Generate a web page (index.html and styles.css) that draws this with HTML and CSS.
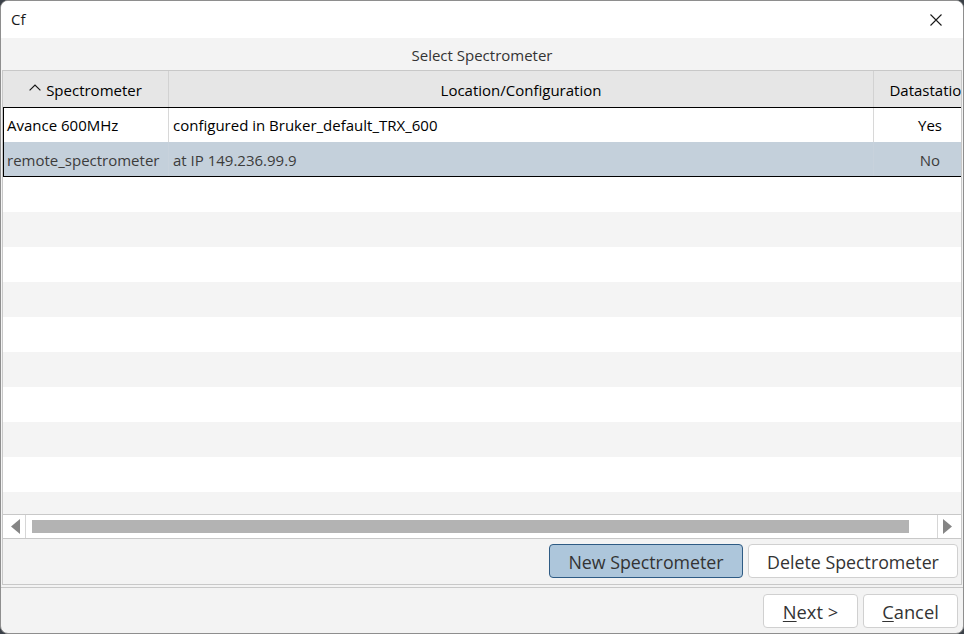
FILE: index.html
```html
<!DOCTYPE html>
<html>
<head>
<meta charset="utf-8">
<link rel="stylesheet" href="styles.css">
</head>
<body>
<div class="window">
  <div class="titlebar">
    <span class="title">Cf</span>
    <svg class="close" width="12" height="12" viewBox="0 0 12 12"><path d="M0.5 0.5 L11.5 11.5 M11.5 0.5 L0.5 11.5" stroke="#1a1a1a" stroke-width="1.1" fill="none"/></svg>
  </div>
  <div class="caption">Select Spectrometer</div>
  <div class="frame">
    <div class="view">
      <div class="table">
        <div class="header">
          <div class="hcell c1"><svg class="chev" width="12" height="7" viewBox="0 0 12 7"><path d="M0.6 6.4 L6 1 L11.4 6.4" stroke="#1a1a1a" stroke-width="1.2" fill="none"/></svg>Spectrometer</div>
          <div class="hcell c2">Location/Configuration</div>
          <div class="hcell c3">Datastation</div>
        </div>
        <div class="focus">
          <div class="row data">
            <div class="cell c1">Avance 600MHz</div>
            <div class="cell c2">configured in Bruker_default_TRX_600</div>
            <div class="cell c3 mid">Yes</div>
          </div>
          <div class="row data sel">
            <div class="cell c1">remote_spectrometer</div>
            <div class="cell c2">at IP 149.236.99.9</div>
            <div class="cell c3 mid">No</div>
          </div>
        </div>
        <div class="row"></div>
        <div class="row alt"></div>
        <div class="row"></div>
        <div class="row alt"></div>
        <div class="row"></div>
        <div class="row alt"></div>
        <div class="row"></div>
        <div class="row alt"></div>
        <div class="row"></div>
        <div class="row alt"></div>
      </div>
    </div>
    <div class="hscroll">
      <div class="sbtn left"><svg width="9" height="15" viewBox="0 0 9 15"><path d="M9 0 L0 7.5 L9 15 Z" fill="#858585"/></svg></div>
      <div class="track"><div class="thumb"></div></div>
      <div class="sbtn right"><svg width="9" height="15" viewBox="0 0 9 15"><path d="M0 0 L9 7.5 L0 15 Z" fill="#858585"/></svg></div>
    </div>
    <div class="actions">
      <button class="btn primary wide1">New Spectrometer</button>
      <button class="btn wide2">Delete Spectrometer</button>
    </div>
  </div>
  <div class="footer">
    <button class="btn small"><u>N</u>ext &gt;</button>
    <button class="btn small"><u>C</u>ancel</button>
  </div>
</div>
</body>
</html>
```
FILE: styles.css
```css
html, body {
  margin: 0;
  padding: 0;
}
body {
  width: 964px;
  height: 634px;
  overflow: hidden;
  background: #3b4148;
  font-family: "Open Sans", "Noto Sans", "DejaVu Sans", sans-serif;
  font-size: 15px;
  color: #000;
}
.window {
  box-sizing: border-box;
  width: 964px;
  height: 634px;
  border: 1px solid #8e8e8e;
  border-radius: 8px;
  background: #f3f3f3;
  overflow: hidden;
  display: flex;
  flex-direction: column;
}
.titlebar {
  height: 37px;
  flex: none;
  background: #ffffff;
  display: flex;
  align-items: center;
  justify-content: space-between;
  padding: 0 21px 0 10px;
}
.title {
  font-size: 15px;
  color: #1a1a1a;
  margin-top: -1px;
}
.close {
  display: block;
}
.caption {
  height: 32px;
  flex: none;
  line-height: 35px;
  text-align: center;
  color: #333;
}
.frame {
  margin: 0 1px;
  height: 515px;
  box-sizing: border-box;
  border: 1px solid #c8c8c8;
  display: flex;
  flex-direction: column;
  flex: none;
}
.view {
  height: 443px;
  overflow: hidden;
  flex: none;
  background: #fff;
}
.table {
  width: 983px;
}
.header {
  display: flex;
  height: 36px;
  background: #e6e6e6;
}
.hcell {
  box-sizing: border-box;
  display: flex;
  align-items: center;
  justify-content: center;
  padding-top: 2px;
  border-right: 1px solid #d2d2d2;
  white-space: nowrap;
  overflow: hidden;
}
.chev {
  margin-right: 5px;
  margin-top: -6px;
}
.c1 { width: 166px; flex: none; }
.c2 { width: 705px; flex: none; }
.c3 { width: 112px; flex: none; border-right: none; }
.focus {
  position: relative;
}
.focus::after {
  content: "";
  position: absolute;
  left: 0;
  top: 0;
  right: 0;
  bottom: 0;
  border: 1px solid #000;
  pointer-events: none;
}
.row {
  height: 35px;
  display: flex;
  background: #ffffff;
}
.row.alt {
  background: #f4f4f4;
}
.row.sel {
  background: #c4d0db;
  color: #3c3c3c;
}
.cell {
  box-sizing: border-box;
  display: flex;
  align-items: center;
  padding-left: 4px;
  padding-top: 1px;
  border-right: 1px solid #d8d8d8;
  white-space: nowrap;
}
.row.sel .cell {
  border-right-color: #c8d2dc;
}
.cell.mid {
  justify-content: center;
  padding-left: 0;
  border-right: none;
}
.hscroll {
  height: 25px;
  box-sizing: border-box;
  border-top: 1px solid #c8c8c8;
  border-bottom: 1px solid #c8c8c8;
  background: #fff;
  display: flex;
  flex: none;
}
.sbtn {
  box-sizing: border-box;
  display: flex;
  align-items: center;
  justify-content: center;
}
.sbtn.left {
  width: 23px;
  border-right: 1px solid #d6d6d6;
  padding-left: 2px;
}
.sbtn.right {
  width: 24px;
  border-left: 1px solid #d6d6d6;
  padding-right: 4px;
}
.track {
  flex: 1;
  display: flex;
  align-items: center;
}
.thumb {
  margin-left: 6px;
  width: 877px;
  height: 13px;
  background: #b3b3b3;
}
.actions {
  flex: 1;
  display: flex;
  justify-content: flex-end;
  align-items: flex-start;
  gap: 5px;
  padding: 5px 3px 0 0;
}
.btn {
  box-sizing: border-box;
  height: 34px;
  border: 1px solid #d0d0d0;
  border-radius: 4px;
  background: #ffffff;
  font-family: "Open Sans", "Noto Sans", "DejaVu Sans", sans-serif;
  font-size: 17.8px;
  color: #333;
  padding: 1px 0 0 0;
  margin: 0;
}
.btn.primary {
  background: #adc6db;
  border-color: #2e5b84;
}
.wide1 { width: 194px; }
.wide2 { width: 210px; }
.footer {
  margin-top: 2px;
  border-top: 1px solid #c8c8c8;
  flex: 1;
  display: flex;
  justify-content: flex-end;
  align-items: flex-start;
  gap: 5px;
  padding: 6px 5px 0 0;
}
.btn.small {
  width: 95px;
  font-size: 18.3px;
}
.btn u {
  text-decoration-thickness: 1px;
  text-underline-offset: 2px;
}
```
